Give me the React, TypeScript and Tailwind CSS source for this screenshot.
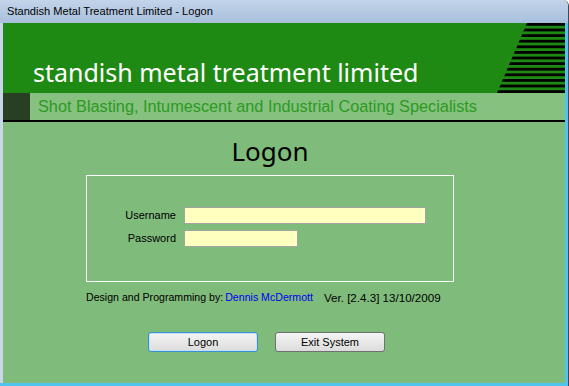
const Stripes: React.FC = () => {
  const rows = Array.from({ length: 13 }, (_, i) => i);
  return (
    <svg width="68" height="70" viewBox="0 0 68 70" className="shrink-0">
      <defs>
        <clipPath id="slant">
          <polygon points="30,0 68,0 68,70 0,70" />
        </clipPath>
      </defs>
      <g clipPath="url(#slant)">
        {rows.map((i) => (
          <rect key={i} x="0" y={i * 5.6} width="68" height="2.8" fill="#000" />
        ))}
      </g>
    </svg>
  );
};

const small = { fontFamily: "'Liberation Sans', Arial, sans-serif" };

export default function App() {
  return (
    <div
      className="w-[569px] h-[386px] flex flex-col bg-[#c6d6ea] overflow-hidden rounded-tr-[6px] border-r border-[#3a4a5a]"
      style={{ fontFamily: "'Noto Sans', 'Open Sans', sans-serif" }}
    >
      {/* title bar */}
      <div
        className="h-[23px] shrink-0 flex items-center pl-[7px] bg-gradient-to-b from-[#c3d4ea] to-[#a8bfdc] text-[11.1px] text-black"
        style={small}
      >
        Standish Metal Treatment Limited - Logon
      </div>

      <div className="flex flex-1">
        <div className="w-[3px] bg-[#c7d6e8]" />

        <div className="flex-1 flex flex-col bg-[#7fbb7b]">
          {/* banner */}
          <div className="h-[70px] flex bg-[#1f8a13]">
            <div className="flex-1 pl-[30px] pt-[34px] text-white text-[25px] leading-[30px]">
              standish metal treatment limited
            </div>
            <Stripes />
          </div>

          <div className="h-[27px] flex bg-[#86c17f]">
            <div className="w-[27px] bg-[#283f24]" />
            <div className="pl-[8px] pt-[3px] text-[16.3px] leading-[20px] text-[#2c9a22]" style={small}>
              Shot Blasting, Intumescent and Industrial Coating Specialists
            </div>
          </div>
          <div className="h-[2px] bg-black" />

          {/* main */}
          <div className="flex-1 flex flex-col ml-[83px] w-[368px]" style={small}>
            <div
              className="mt-[13px] h-[32px] text-center text-[26px] leading-[32px] text-black"
              style={{ fontFamily: "'Noto Sans', sans-serif" }}
            >
              Logon
            </div>

            <div className="mt-[8px] h-[107px] border border-white flex flex-col justify-center gap-[6px] pb-[4px]">
              <div className="flex items-center">
                <div className="w-[89px] text-right text-[11px] text-black">Username</div>
                <div className="ml-[8px] w-[242px] h-[17px] border border-[#a4a4a4] bg-[#ffffc0]" />
              </div>
              <div className="flex items-center">
                <div className="w-[89px] text-right text-[11px] text-black">Password</div>
                <div className="ml-[8px] w-[114px] h-[17px] border border-[#a4a4a4] bg-[#ffffc0]" />
              </div>
            </div>

            <div className="mt-[8px] flex items-center h-[16px] text-[10.6px] text-black whitespace-nowrap">
              <span>Design and Programming by:</span>
              <span className="ml-[2px] text-[#0000ee]">Dennis McDermott</span>
              <span className="ml-[11px] text-[11.6px]">Ver. [2.4.3] 13/10/2009</span>
            </div>

            <div className="mt-[26px] flex gap-[17px] pl-[62px]">
              <button className="w-[110px] h-[20px] rounded-[3px] border border-[#3c8fd0] bg-gradient-to-b from-[#f4f4f4] to-[#dcdcdc] text-[11px] text-black shadow-[inset_0_0_0_1px_#bfe3f8]">
                Logon
              </button>
              <button className="w-[110px] h-[20px] rounded-[3px] border border-[#707070] bg-gradient-to-b from-[#f4f4f4] to-[#dcdcdc] text-[11px] text-black">
                Exit System
              </button>
            </div>
          </div>
        </div>

        <div className="w-[3px] bg-[#4fc4ee]" />
      </div>
      <div className="h-[3px] shrink-0 bg-[#4fc4ee]" />
    </div>
  );
}
